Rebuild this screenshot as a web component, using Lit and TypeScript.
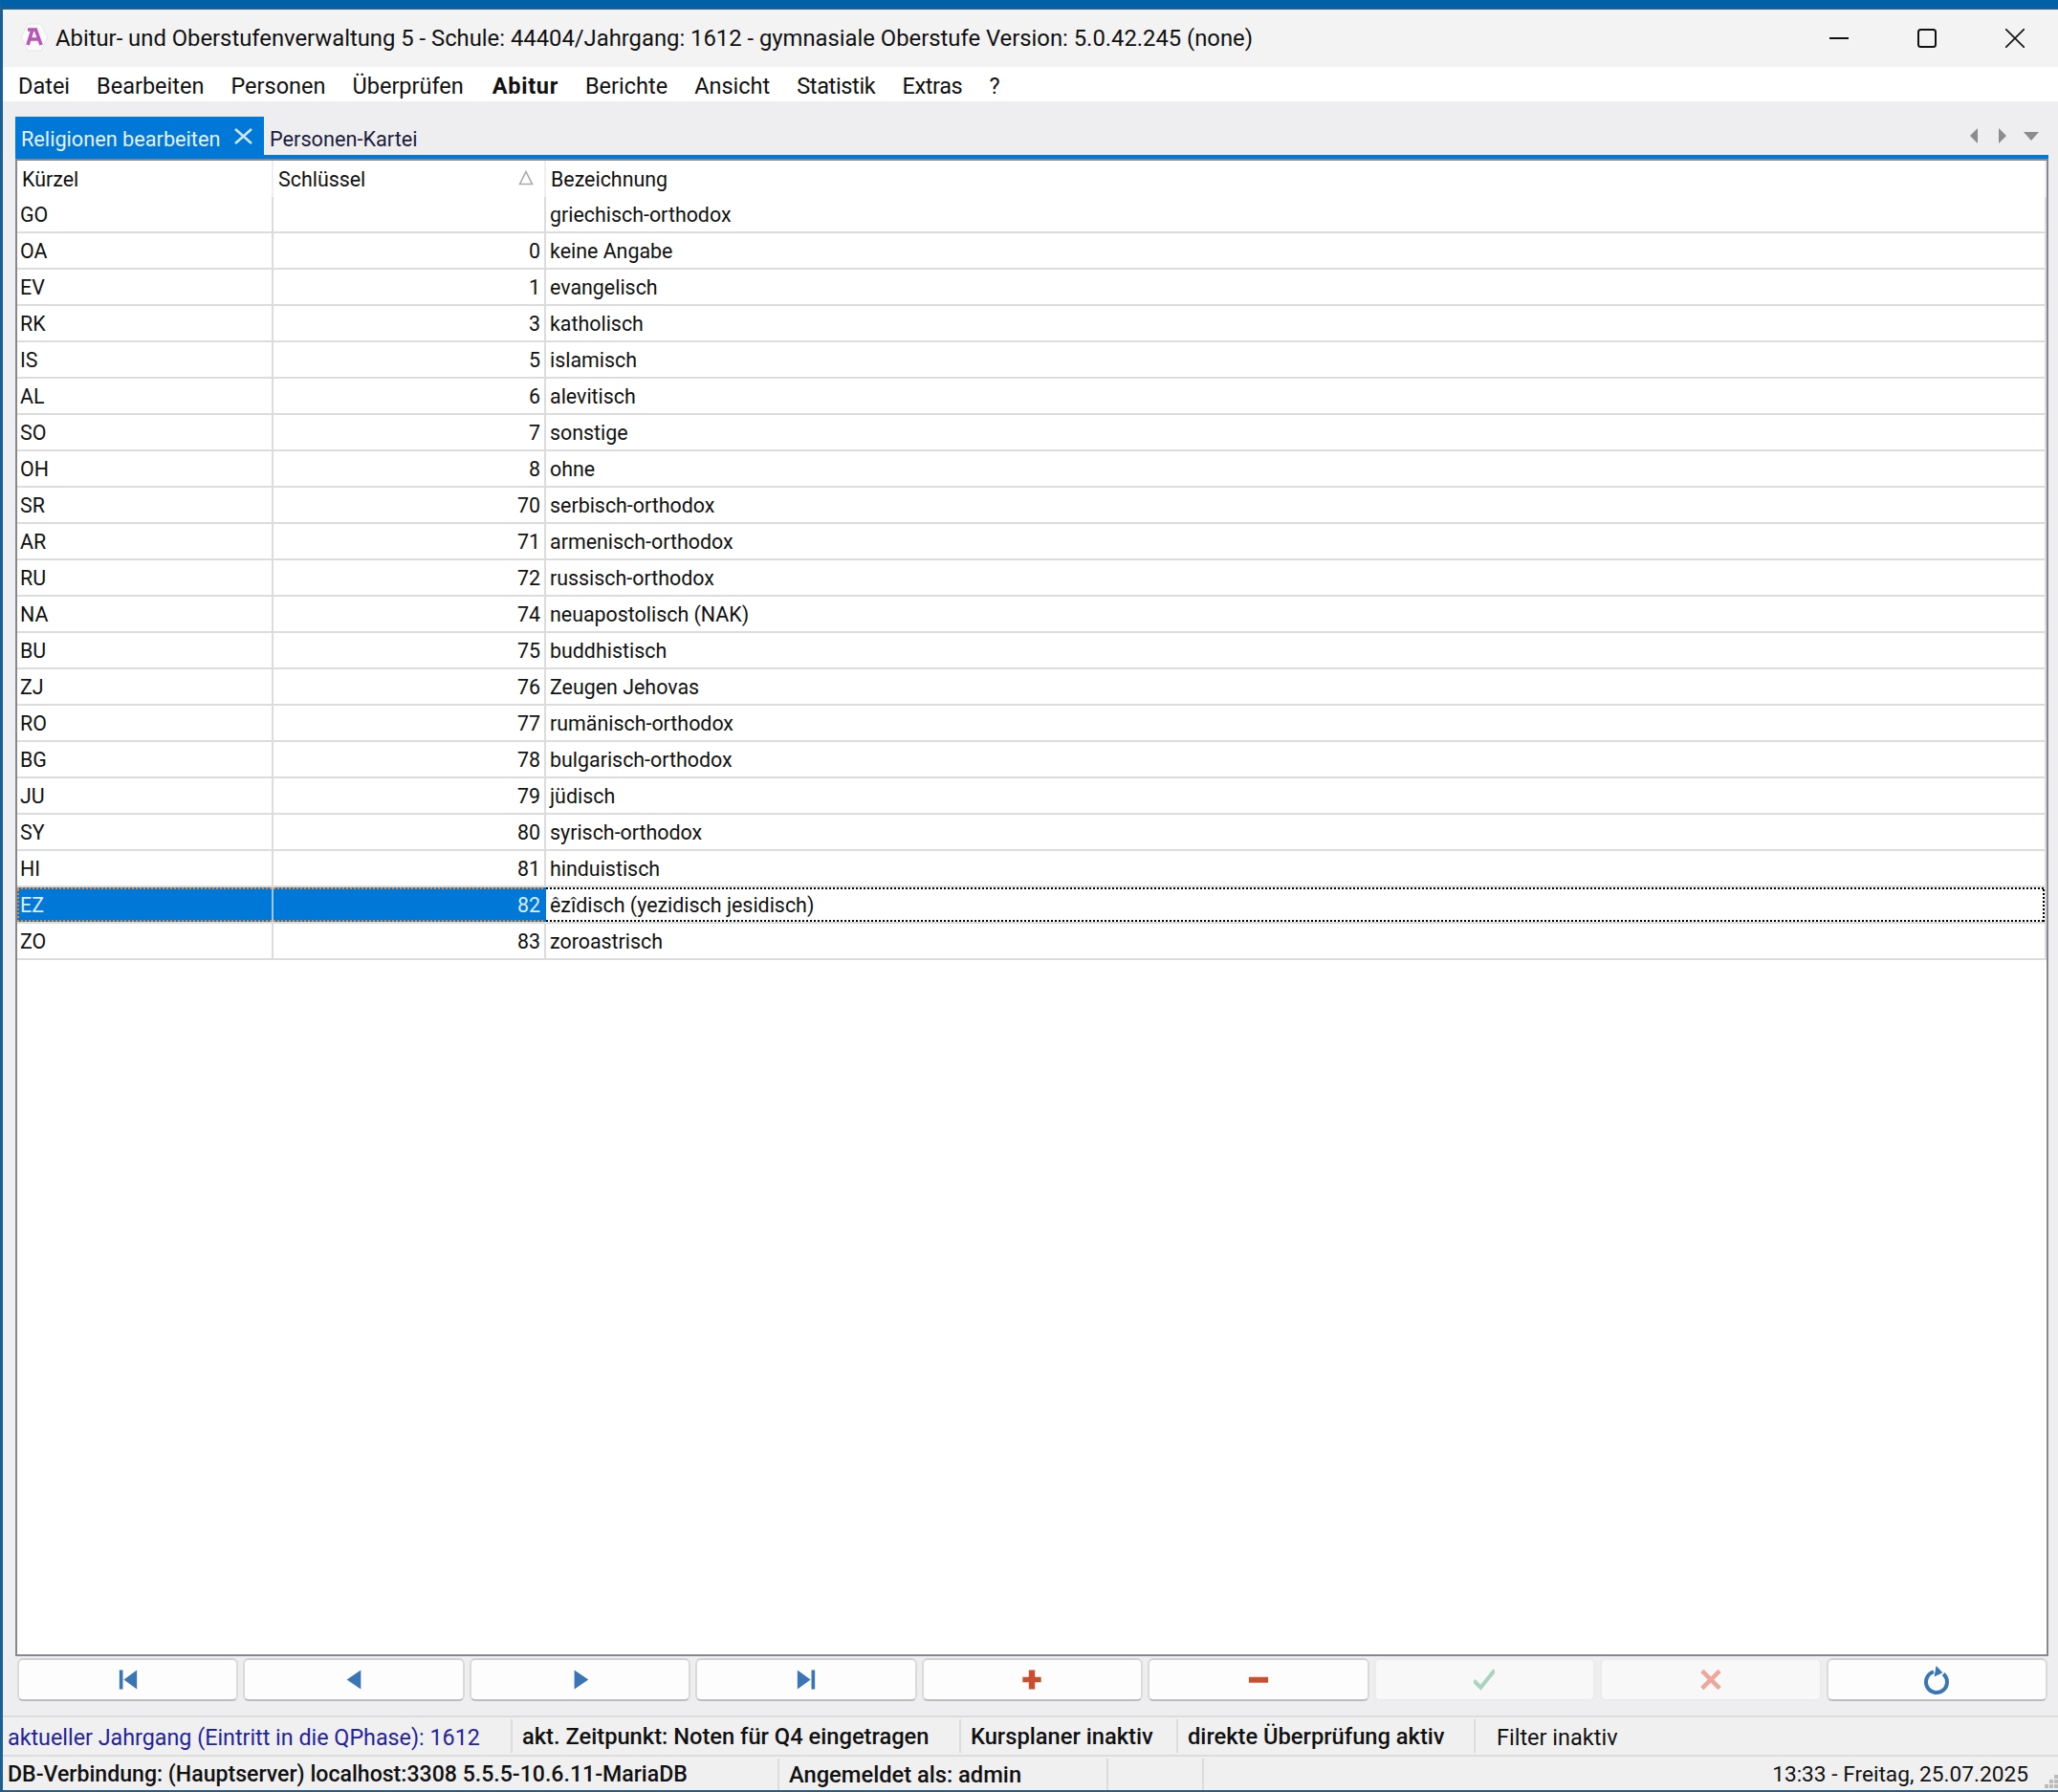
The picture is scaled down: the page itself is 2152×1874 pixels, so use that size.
import { LitElement, html, css, svg } from "lit";
import { customElement } from "lit/decorators.js";

const ROWS = [
  ["GO", "", "griechisch-orthodox"],
  ["OA", "0", "keine Angabe"],
  ["EV", "1", "evangelisch"],
  ["RK", "3", "katholisch"],
  ["IS", "5", "islamisch"],
  ["AL", "6", "alevitisch"],
  ["SO", "7", "sonstige"],
  ["OH", "8", "ohne"],
  ["SR", "70", "serbisch-orthodox"],
  ["AR", "71", "armenisch-orthodox"],
  ["RU", "72", "russisch-orthodox"],
  ["NA", "74", "neuapostolisch (NAK)"],
  ["BU", "75", "buddhistisch"],
  ["ZJ", "76", "Zeugen Jehovas"],
  ["RO", "77", "rumänisch-orthodox"],
  ["BG", "78", "bulgarisch-orthodox"],
  ["JU", "79", "jüdisch"],
  ["SY", "80", "syrisch-orthodox"],
  ["HI", "81", "hinduistisch"],
  ["EZ", "82", "êzîdisch (yezidisch jesidisch)"],
  ["ZO", "83", "zoroastrisch"],
];

const MENU = [
  { t: "Datei" },
  { t: "Bearbeiten" },
  { t: "Personen" },
  { t: "Überprüfen" },
  { t: "Abitur", c: "bold" },
  { t: "Berichte" },
  { t: "Ansicht" },
  { t: "Statistik", c: "tight" },
  { t: "Extras", c: "tight" },
  { t: "?" },
];

const BLUE = "#3a76b5";
const RED = "#c9502f";

const BUTTONS = [
  { icon: svg`<path fill=${BLUE} d="M2 1h4v22H2zM22 1v22L7 12z"/>` },
  { icon: svg`<path fill=${BLUE} d="M20 1v22L4 12z"/>` },
  { icon: svg`<path fill=${BLUE} d="M5 1v22l16-11z"/>` },
  { icon: svg`<path fill=${BLUE} d="M18 1h4v22h-4zM2 1v22l15-11z"/>` },
  { icon: svg`<path fill=${RED} d="M8.500 1h7v8h7v6h-7v8h-7v-8h-7V9h7z"/>` },
  { icon: svg`<path fill=${RED} d="M1 9h22v6.500H1z"/>` },
  { icon: svg`<path fill="none" stroke="#a8d5bf" stroke-width="4.500" d="M0 13l8 8L24 1"/>`, off: true },
  { icon: svg`<path fill="none" stroke="#eba89b" stroke-width="5" d="M2 2l20 20M22 2L2 22"/>`, off: true },
  {
    icon: svg`<path fill="none" stroke=${BLUE} stroke-width="4" d="M21.100 8.600a11 11 0 1 1-10.100-2.200"/><path fill=${BLUE} d="M13.600 0l6.800 7.200-8.800 4.300z"/>`,
    wide: true,
  },
];

@customElement("app-root")
export class AppRoot extends LitElement {
  static styles = css`
    :host {
      display: block;
      width: 2152px;
      height: 1874px;
      overflow: hidden;
      font-family: Roboto, "Liberation Sans", sans-serif;
      color: #111;
    }
    .window {
      box-sizing: border-box;
      height: 1874px;
      display: flex;
      flex-direction: column;
      background: #eeeef0;
      border-top: 8px solid #0060a8;
      border-left: 3px solid #1a5f96;
      border-bottom: 2px solid #2b5b82;
    }
    .titlebar {
      height: 62px;
      flex: none;
      box-sizing: border-box;
      border-top: 2px solid #1f6090;
      background: #f3f3f3;
      display: flex;
      align-items: center;
      padding: 0 35px 0 18px;
      font-size: 23.800px;
      color: #111;
    }
    .logo {
      width: 30px;
      height: 30px;
      margin: -2px 7px 0 0;
      flex: none;
    }
    .logo .mark {
      filter: blur(0.5px);
    }
    .controls {
      margin-left: auto;
      display: flex;
    }
    .controls svg {
      width: 20px;
      height: 20px;
      display: block;
    }
    .controls svg + svg {
      margin-left: 72px;
    }
    .menu {
      height: 36px;
      flex: none;
      box-sizing: border-box;
      padding: 3px 0 0 16px;
      background: #fff;
      display: flex;
      align-items: center;
      gap: 28px;
      font-size: 23.500px;
    }
    .menu .bold {
      font-weight: 700;
      letter-spacing: 0.7px;
      margin-left: 2px;
    }
    .menu .tight {
      letter-spacing: -0.35px;
    }
    .tabs {
      height: 56px;
      flex: none;
      display: flex;
      align-items: flex-end;
      padding: 0 20px 0 13px;
    }
    .tab {
      height: 40px;
      box-sizing: border-box;
      font-size: 21.700px;
      padding: 11px 0 0 6px;
      display: flex;
      align-items: flex-start;
      width: 260px;
      background: #0078d7;
      color: #e4f1fb;
    }
    .tab svg {
      width: 19px;
      height: 17px;
      margin: 1px 12px 0 auto;
    }
    .tab.plain {
      background: none;
      color: #1c1c3c;
      width: auto;
    }
    .nav {
      margin-left: auto;
      align-self: center;
      display: flex;
      align-items: center;
      padding-top: 16px;
      gap: 22px;
    }
    .nav svg {
      height: 16px;
      width: 8px;
      display: block;
    }
    .nav svg.down {
      height: 9px;
      width: 16px;
      margin-left: -4px;
    }
    .strip {
      height: 4px;
      flex: none;
      margin: 0 10px 0 13px;
      background: #0078d7;
    }
    .table {
      flex: 1;
      margin: 0 10px 0 13px;
      box-sizing: border-box;
      background: #fff;
      border: 2px solid #85888f;
      display: flex;
      flex-direction: column;
      font-size: 21.400px;
      color: #111;
    }
    .row {
      flex: none;
      height: 38px;
      box-sizing: border-box;
      display: grid;
      grid-template-columns: 268px 285px 1fr;
      border-bottom: 2px solid #dcdcdc;
    }
    .row.head {
      border-bottom: 0;
    }
    .cell {
      box-sizing: border-box;
      border-right: 2px solid #dcdcdc;
      padding: 0 4px 0 3px;
      display: flex;
      align-items: center;
      white-space: nowrap;
    }
    .cell.num {
      justify-content: flex-end;
    }
    .cell.txt {
      padding-left: 4px;
    }
    .head .cell {
      border-right-color: #efefef;
      justify-content: space-between;
      padding: 0 11px 0 5px;
    }
    .head .cell.txt {
      padding-left: 5px;
    }
    .head svg {
      width: 16px;
      height: 16px;
      margin-top: -2px;
    }
    .sel .cell {
      background-repeat: no-repeat;
      background-image:
        repeating-linear-gradient(90deg, var(--dot) 0 2px, transparent 2px 4px),
        repeating-linear-gradient(90deg, var(--dot) 0 2px, transparent 2px 4px),
        repeating-linear-gradient(0deg, var(--dot) 0 2px, transparent 2px 4px);
      background-size: 100% 2px, 100% 2px, 2px 100%;
      background-position: left top, left bottom, var(--edge) top;
    }
    .sel .cell.on {
      --dot: #f0862a;
      background-color: #0078d7;
      color: #dcecfa;
      border-right-color: #9cc8ee;
    }
    .sel .cell.first {
      --edge: left;
    }
    .sel .cell.mid {
      --edge: -4px;
      border-right-color: #0078d7;
    }
    .sel .cell.txt {
      --dot: #000;
      --edge: right;
    }
    .pager {
      height: 62px;
      flex: none;
      box-sizing: border-box;
      padding: 2px 11px 15px 15px;
      display: grid;
      grid-template-columns: repeat(9, 1fr);
      gap: 5px;
    }
    .pager button {
      all: unset;
      box-sizing: border-box;
      display: flex;
      align-items: center;
      justify-content: center;
      background: #fdfdfd;
      border: 2px solid #dadada;
      border-top-color: #d2d2d2;
      border-bottom-color: #bcbcbc;
      border-radius: 6px;
    }
    .pager button.off {
      background: #f8f8f8;
      border-color: #ebebeb;
    }
    .pager svg {
      width: 22px;
      height: 23px;
      display: block;
    }
    .pager svg.wide {
      width: 28px;
      height: 30px;
    }
    .status {
      flex: none;
      box-sizing: border-box;
      border-top: 2px solid #dcdcdc;
      background: #f0f0f0;
      display: grid;
      align-items: center;
      font-size: 23.700px;
      color: #111;
    }
    .status.one {
      height: 41px;
      grid-template-columns: 533px 469px 227px 311px 1fr;
      padding: 2px 0;
    }
    .status.two {
      height: 37px;
      grid-template-columns: 812px 344px 100px 1fr;
      padding: 2px 0 0;
    }
    .status span {
      height: 100%;
      box-sizing: border-box;
      display: flex;
      align-items: center;
      padding-left: 10px;
      border-right: 2px solid #dcdcdc;
      white-space: nowrap;
    }
    .status span.m {
      font-weight: 500;
    }
    .status span.info {
      padding: 2px 0 0 5px;
      font-size: 23.300px;
      color: #24229c;
    }
    .status span.db {
      padding-left: 5px;
      font-size: 23.100px;
    }
    .status span.filter {
      border: 0;
      padding: 2px 0 0 22px;
      font-size: 23.500px;
    }
    .status span.clock {
      border: 0;
      justify-content: flex-end;
      padding-right: 31px;
      position: relative;
      font-size: 22.700px;
    }
    .grip {
      position: absolute;
      right: 0;
      bottom: 2px;
      width: 14px;
      height: 14px;
    }
  `;

  render() {
    return html`
      <div class="window">
        <div class="titlebar">
          <svg class="logo" viewBox="0 0 30 30">
            <path fill="#fbfbfb" stroke="#e6e6e6" d="M8 1h14l7 14-7 14H8L1 15z"/>
            <path class="mark" fill="none" stroke="#b855b8" stroke-width="3.600" d="M8 7h10M16 6l6 17M13 7L8 23M11 17h9"/>
          </svg>
          Abitur- und Oberstufenverwaltung 5 - Schule: 44404/Jahrgang: 1612 - gymnasiale Oberstufe Version: 5.0.42.245 (none)
          <div class="controls">
            <svg viewBox="0 0 20 20"><path stroke="#111" stroke-width="2" d="M0 10h20"/></svg>
            <svg viewBox="0 0 20 20"><rect x="1" y="1" width="18" height="18" rx="2.500" fill="none" stroke="#111" stroke-width="2"/></svg>
            <svg viewBox="0 0 20 20"><path stroke="#111" stroke-width="1.600" d="M0 0l20 20M20 0L0 20"/></svg>
          </div>
        </div>
        <div class="menu">
          ${MENU.map((m) => html`<span class=${m.c ?? ""}>${m.t}</span>`)}
        </div>
        <div class="tabs">
          <div class="tab">
            Religionen bearbeiten
            <svg viewBox="0 0 19 17"><path stroke="#cfe4f7" stroke-width="2.600" fill="none" d="M1 1l17 15M18 1L1 16"/></svg>
          </div>
          <div class="tab plain">Personen-Kartei</div>
          <div class="nav">
            <svg viewBox="0 0 8 16"><path fill="#8c8c90" d="M8 0v16L0 8z"/></svg>
            <svg viewBox="0 0 8 16"><path fill="#8c8c90" d="M0 0v16l8-8z"/></svg>
            <svg class="down" viewBox="0 0 16 9"><path fill="#8c8c90" d="M0 0h16L8 9z"/></svg>
          </div>
        </div>
        <div class="strip"></div>
        <div class="table">
          <div class="row head">
            <div class="cell">Kürzel</div>
            <div class="cell">
              Schlüssel
              <svg viewBox="0 0 16 16"><path fill="none" stroke="#aaa" stroke-width="1.600" d="M8 1.500L14.500 14.500H1.500z"/></svg>
            </div>
            <div class="cell txt">Bezeichnung</div>
          </div>
          ${ROWS.map(
            (r) => html`
              <div class="row ${r[0] === "EZ" ? "sel" : ""}">
                <div class="cell on first">${r[0]}</div>
                <div class="cell on mid num">${r[1]}</div>
                <div class="cell txt">${r[2]}</div>
              </div>
            `
          )}
        </div>
        <div class="pager">
          ${BUTTONS.map(
            (b) => html`
              <button class=${b.off ? "off" : ""}>
                <svg class=${b.wide ? "wide" : ""} viewBox=${b.wide ? "0 0 28 30" : "0 0 24 24"}>${b.icon}</svg>
              </button>
            `
          )}
        </div>
        <div class="status one">
          <span class="info">aktueller Jahrgang (Eintritt in die QPhase): 1612</span>
          <span class="m">akt. Zeitpunkt: Noten für Q4 eingetragen</span>
          <span class="m">Kursplaner inaktiv</span>
          <span class="m">direkte Überprüfung aktiv</span>
          <span class="filter">Filter inaktiv</span>
        </div>
        <div class="status two">
          <span class="m db">DB-Verbindung: (Hauptserver) localhost:3308 5.5.5-10.6.11-MariaDB</span>
          <span class="m">Angemeldet als: admin</span>
          <span></span>
          <span class="clock">
            13:33 - Freitag, 25.07.2025
            <svg class="grip" viewBox="0 0 14 14">
              <path fill="#bbb" d="M10 0h4v4h-4zM5 5h4v4H5zM10 5h4v4h-4zM0 10h4v4H0zM5 10h4v4H5zM10 10h4v4h-4z"/>
            </svg>
          </span>
        </div>
      </div>
    `;
  }
}
